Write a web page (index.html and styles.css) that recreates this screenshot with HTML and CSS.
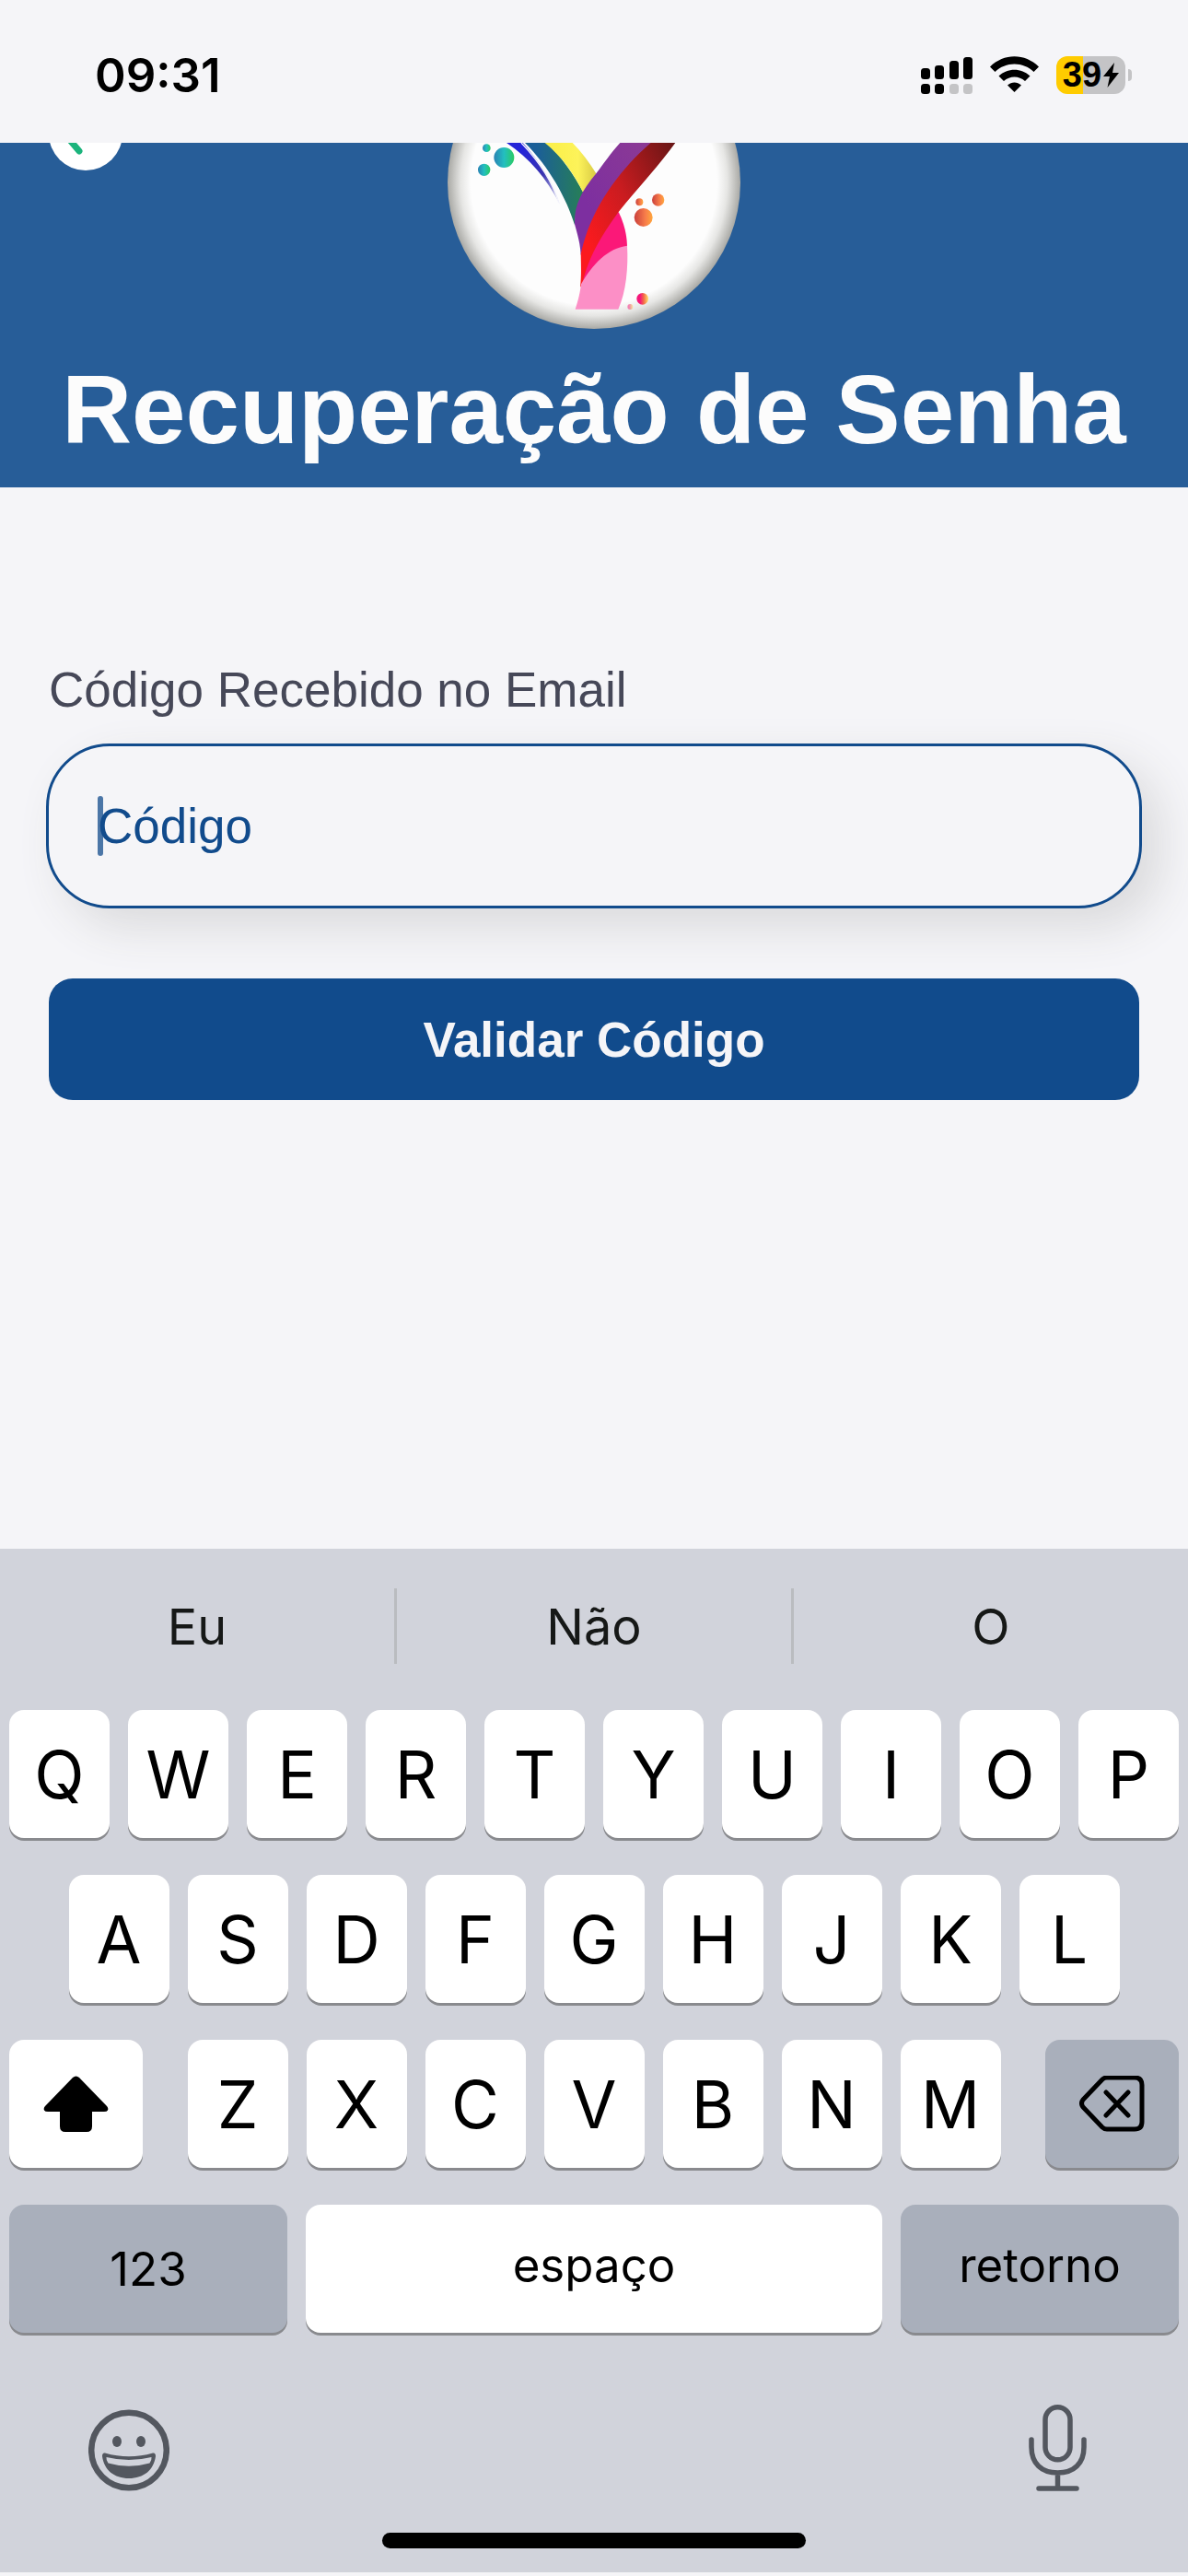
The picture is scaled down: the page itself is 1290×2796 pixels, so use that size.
FILE: index.html
```html
<!DOCTYPE html>
<html lang="pt-br">
<head>
    <meta charset="UTF-8">
    <meta name="viewport" content="width=device-width, initial-scale=1.0">
    <title>Recuperação de Senha</title>
    <link rel="stylesheet" href="styles.css">
</head>
<body>
    <div class="status-bar">
        <span class="time">09:31</span>
        <div class="status-icons">
            <svg class="signal" viewBox="0 0 56 41">
                <rect x="0" y="13" width="10" height="12" rx="3.500"/>
                <rect x="15" y="10" width="10" height="15" rx="3.500"/>
                <rect x="31" y="5" width="10" height="20" rx="3.500"/>
                <rect x="46" y="1" width="10" height="24" rx="3.500"/>
                <rect x="0" y="30" width="10" height="11" rx="3.500"/>
                <rect x="15" y="30" width="10" height="11" rx="3.500"/>
                <rect x="31" y="30" width="10" height="11" rx="3.500" fill="#c4c4c6"/>
                <rect x="46" y="30" width="10" height="11" rx="3.500" fill="#c4c4c6"/>
            </svg>
            <svg class="wifi" viewBox="0 0 53 41">
                <path d="M0 11.500C15-3.500 38-3.500 53 11.500L47.500 17C36 5.500 17 5.500 5.500 17Z"/>
                <path d="M9.500 21.500C19 12.500 34 12.500 43.500 21.500L38 27C31.500 21 21.500 21 15 27Z"/>
                <path d="M19 31.500C23.500 27.500 29.500 27.500 34 31.500L26.500 39Z"/>
            </svg>
            <div class="battery">
                <div class="battery-level">
                    <span>39</span>
                    <svg class="bolt" viewBox="0 0 17 27"><path d="M12 0L0 15H7L4.500 27L17 11H10Z"/></svg>
                </div>
                <div class="battery-tip"></div>
            </div>
        </div>
    </div>

    <header class="header">
        <div class="header-top">
            <button type="button" class="back-button" aria-label="Voltar">
                <svg viewBox="0 0 80 80"><path d="M33 59L17 40L33 21"/></svg>
            </button>
            <svg class="logo" viewBox="78 45 954 606" role="img" aria-label="Logo">
                <defs>
                    <radialGradient id="plate">
                        <stop offset="0.84" stop-color="#fdfdfd"/>
                        <stop offset="0.91" stop-color="#e6e6e4"/>
                        <stop offset="1" stop-color="#a9a9a5"/>
                    </radialGradient>
                    <linearGradient id="teal"><stop offset="0.2" stop-color="#1b5f98"/><stop offset="1" stop-color="#277f55"/></linearGradient>
                    <linearGradient id="blue" x1="0" y1="0" x2="1" y2="1"><stop offset="0.2" stop-color="#2424d8"/><stop offset="0.6" stop-color="#3a34b0"/><stop offset="1" stop-color="#e8e8f8"/></linearGradient>
                    <linearGradient id="yellow"><stop offset="0.2" stop-color="#fbf04c"/><stop offset="0.65" stop-color="#fdf35a"/><stop offset="1" stop-color="#d9cb45"/></linearGradient>
                    <linearGradient id="purple" x1="0" y1="1" x2="1" y2="0"><stop offset="0.3" stop-color="#7d2fa0"/><stop offset="1" stop-color="#8c3a94"/></linearGradient>
                    <linearGradient id="red" x1="0" y1="0.8" x2="1" y2="0"><stop offset="0.1" stop-color="#fb1a1e"/><stop offset="0.5" stop-color="#c91c20"/><stop offset="1" stop-color="#661515"/></linearGradient>
                    <linearGradient id="sea"><stop offset="0" stop-color="#2a82b4"/><stop offset="0.5" stop-color="#23bfc0"/><stop offset="1" stop-color="#2bcb62"/></linearGradient>
                    <linearGradient id="orange"><stop offset="0" stop-color="#c93f3c"/><stop offset="0.6" stop-color="#f77c4a"/><stop offset="1" stop-color="#ffa83e"/></linearGradient>
                    <linearGradient id="candy"><stop offset="0.3" stop-color="#f5177a"/><stop offset="0.6" stop-color="#f26a48"/><stop offset="1" stop-color="#ffe36a"/></linearGradient>
                </defs>
                <circle cx="555" cy="174" r="477" fill="url(#plate)"/>
                <path d="M270 45H323C375 105 420 170 444 246C400 160 345 95 270 45Z" fill="url(#blue)"/>
                <path d="M318 45C375 105 418 165 440 240" fill="none" stroke="#f4f4fc" stroke-width="4"/>
                <path d="M330 45H400C450 90 490 150 522 210C505 240 495 270 492 312C465 225 410 125 330 45Z" fill="url(#teal)"/>
                <path d="M395 45H485C515 75 540 110 562 145L522 212C490 145 450 90 395 45Z" fill="url(#yellow)"/>
                <path d="M640 45H745L560 330L512 410C510 370 500 340 492 310C490 250 512 205 562 145C585 115 612 75 640 45Z" fill="url(#purple)"/>
                <path d="M740 45H820C770 115 700 190 635 270L580 400L518 505L510 515C514 480 513 450 512 408C540 270 630 140 740 45Z" fill="url(#red)"/>
                <path d="M635 270C652 305 662 340 663 382L570 480L517 503C535 420 580 345 635 270Z" fill="#fb1878"/>
                <path d="M663 380C667 450 660 530 634 587H494C505 555 510 530 513 505C550 440 600 388 663 380Z" fill="#fc8fc6"/>
                <g fill="url(#sea)">
                    <circle cx="205" cy="62" r="13"/>
                    <circle cx="262" cy="93" r="33"/>
                    <circle cx="197" cy="133" r="20"/>
                </g>
                <g fill="url(#orange)">
                    <circle cx="703" cy="238" r="12"/>
                    <circle cx="764" cy="231" r="20"/>
                    <circle cx="716" cy="288" r="30"/>
                </g>
                <g fill="url(#candy)">
                    <circle cx="713" cy="553" r="19"/>
                    <circle cx="673" cy="579" r="9" opacity="0.5"/>
                </g>
            </svg>
        </div>
        <h1 class="title">Recuperação de Senha</h1>
    </header>

    <form class="code-form">
        <label for="codigo">Código Recebido no Email</label>
        <div class="input-box">
            <input type="text" id="codigo" placeholder="Código">
            <span class="caret"></span>
        </div>
        <button type="button" class="submit-button">Validar Código</button>
    </form>

    <div class="keyboard">
        <div class="suggestions">
            <button type="button">Eu</button>
            <button type="button">Não</button>
            <button type="button">O</button>
        </div>

        <div class="keys">
            <div class="key-row">
                <button type="button" class="key">Q</button>
                <button type="button" class="key">W</button>
                <button type="button" class="key">E</button>
                <button type="button" class="key">R</button>
                <button type="button" class="key">T</button>
                <button type="button" class="key">Y</button>
                <button type="button" class="key">U</button>
                <button type="button" class="key">I</button>
                <button type="button" class="key">O</button>
                <button type="button" class="key">P</button>
            </div>
            <div class="key-row">
                <button type="button" class="key">A</button>
                <button type="button" class="key">S</button>
                <button type="button" class="key">D</button>
                <button type="button" class="key">F</button>
                <button type="button" class="key">G</button>
                <button type="button" class="key">H</button>
                <button type="button" class="key">J</button>
                <button type="button" class="key">K</button>
                <button type="button" class="key">L</button>
            </div>
            <div class="key-row spread">
                <button type="button" class="key side" aria-label="Maiúsculas">
                    <svg class="key-icon" viewBox="0 0 71 61"><path d="M32 2Q35.500-1 39 2L69 33Q71 35.500 70 37.500Q69 39 66 39H53V55Q53 61 47 61H24Q18 61 18 55V39H5Q2 39 1 37.500Q0 35.500 2 33Z"/></svg>
                </button>
                <div class="key-group">
                    <button type="button" class="key">Z</button>
                    <button type="button" class="key">X</button>
                    <button type="button" class="key">C</button>
                    <button type="button" class="key">V</button>
                    <button type="button" class="key">B</button>
                    <button type="button" class="key">N</button>
                    <button type="button" class="key">M</button>
                </div>
                <button type="button" class="key side gray" aria-label="Apagar">
                    <svg class="key-icon line" viewBox="0 0 71 61">
                        <path d="M30 2H60Q68 2 68 10V50Q68 58 60 58H30Q27 58 25 56L4 34Q1 30 4 26L25 4Q27 2 30 2Z"/>
                        <path d="M29 18L53 43M53 18L29 43"/>
                    </svg>
                </button>
            </div>
            <div class="key-row">
                <button type="button" class="key wide gray numbers">123</button>
                <button type="button" class="key word space">espaço</button>
                <button type="button" class="key wide word gray">retorno</button>
            </div>
        </div>

        <div class="keyboard-tools">
            <button type="button" aria-label="Emoji">
                <svg class="emoji" viewBox="0 0 88 89">
                    <circle cx="44" cy="44.500" r="40.800" fill="none" stroke="#53575f" stroke-width="6.500"/>
                    <ellipse cx="31" cy="35" rx="5" ry="6"/>
                    <ellipse cx="57" cy="35" rx="5" ry="6"/>
                    <path d="M18 47.500Q44 55 70 47.500Q73 47 73 51C71 66 60 75 44 75C28 75 17 66 15 51Q15 47 18 47.500Z"/>
                    <path d="M19.500 52Q44 58 68.500 52Q69 55 66.500 58.500Q44 65 21.500 58.500Q19 55 19.500 52Z" fill="#d1d3db"/>
                </svg>
            </button>
            <button type="button" aria-label="Ditado">
                <svg class="mic" viewBox="0 0 63 94">
                    <rect x="18" y="2.800" width="27" height="57" rx="13.500"/>
                    <path d="M3 38V46C3 64 14 74 31.500 74C49 74 60 64 60 46V38M31.500 74V90M11 91H52"/>
                </svg>
            </button>
        </div>
        <div class="home-bar"></div>
    </div>
</body>
</html>
```
FILE: styles.css
```css
* {
    box-sizing: border-box;
}

body {
    margin: 0;
    padding-bottom: 4px;
    min-height: 100vh;
    display: flex;
    flex-direction: column;
    font-family: "Liberation Sans", Arial, sans-serif;
    background-color: #f5f5f8;
    color: #000;
}

button {
    margin: 0;
    padding: 0;
    border: none;
    background: none;
    color: inherit;
    font-family: inherit;
    cursor: pointer;
}

svg {
    display: block;
}

/* barra de status */
.status-bar {
    display: flex;
    justify-content: space-between;
    align-items: center;
    height: 155px;
    padding: 8px 61px 0 103px;
}

.time {
    font-family: Inter, sans-serif;
    font-size: 51px;
    font-weight: 600;
}

.status-icons {
    display: flex;
    align-items: center;
    gap: 19px;
}

.signal {
    width: 56px;
    height: 41px;
}

.wifi {
    width: 53px;
    height: 41px;
}

.battery {
    display: flex;
    align-items: center;
    gap: 3px;
}

.battery-level {
    display: flex;
    align-items: center;
    justify-content: center;
    gap: 2px;
    width: 75px;
    height: 41px;
    border-radius: 12px;
    background: linear-gradient(to right, #ffcc00 39%, #c4c4c6 39%);
    font-size: 38px;
    font-weight: bold;
}

.bolt {
    width: 17px;
    height: 27px;
}

.battery-tip {
    width: 4px;
    height: 13px;
    border-radius: 0 6px 6px 0;
    background-color: #c4c4c6;
}

/* cabeçalho */
.header {
    overflow: hidden;
    padding-bottom: 24px;
    background-color: #275d98;
}

.header-top {
    display: grid;
    grid-template-columns: 1fr auto 1fr;
    align-items: start;
    padding: 0 53px;
}

.back-button {
    width: 80px;
    height: 80px;
    margin-top: -50px;
    border-radius: 50%;
    background-color: #fff;
}

.back-button path {
    fill: none;
    stroke: #1bb47c;
    stroke-width: 7;
    stroke-linecap: round;
    stroke-linejoin: round;
}

.logo {
    width: 318px;
    height: 202px;
}

.title {
    margin: 28px 0 0;
    font-size: 105px;
    line-height: 120px;
    text-align: center;
    color: #fcfcfc;
}

/* formulário */
.code-form {
    flex: 1;
    display: flex;
    flex-direction: column;
    padding: 190px 53px 0;
}

.code-form label {
    font-size: 53px;
    line-height: 60px;
    color: #464858;
}

.input-box {
    position: relative;
    margin: 28px -3px 0;
}

.input-box input {
    display: block;
    width: 100%;
    height: 179px;
    padding: 0 53px;
    border: 3px solid #114b8c;
    border-radius: 69px;
    outline: none;
    background-color: #f5f5f8;
    box-shadow: 20px 20px 50px #dadadc;
    font-family: inherit;
    font-size: 53px;
    color: #114b8c;
}

.input-box input::placeholder {
    color: #114b8c;
    opacity: 1;
}

.caret {
    position: absolute;
    left: 56px;
    top: 57px;
    width: 6px;
    height: 65px;
    border-radius: 3px;
    background-color: #114b8c;
    opacity: 0.75;
}

.submit-button {
    height: 132px;
    margin-top: 76px;
    border-radius: 26px;
    background-color: #114b8c;
    color: #f5f5f8;
    font-size: 53px;
    font-weight: bold;
}

/* teclado */
.keyboard {
    padding-bottom: 26px;
    background-color: #d1d3db;
    font-family: Inter, sans-serif;
}

.suggestions {
    display: flex;
    padding: 43px 0 50px;
}

.suggestions button {
    flex: 1 1 0;
    height: 82px;
    font-size: 54px;
    color: #161817;
}

.suggestions button:not(:last-child) {
    border-right: 3px solid #babcc0;
}

.keys {
    display: flex;
    flex-direction: column;
    gap: 40px;
    padding: 0 10px;
}

.key-row {
    display: flex;
    justify-content: center;
    gap: 20px;
}

.key-row.spread {
    justify-content: space-between;
}

.key-group {
    display: flex;
    gap: 20px;
}

.key {
    display: flex;
    align-items: center;
    justify-content: center;
    width: 109px;
    height: 139px;
    border-radius: 16px;
    background-color: #fff;
    box-shadow: 0 3px 0 #898a8e;
    font-size: 71px;
}

.key.side {
    width: 145px;
}

.key.wide {
    width: 302px;
}

.key.space {
    flex: 1;
}

.key.gray {
    background-color: #a9afbb;
}

.key.numbers {
    font-size: 51px;
}

.key.word {
    padding-bottom: 8px;
    font-size: 51px;
}

.key-icon {
    width: 71px;
    height: 61px;
}

.key-icon.line {
    fill: none;
    stroke: #000;
    stroke-width: 5;
    stroke-linecap: round;
    stroke-linejoin: round;
}

.keyboard-tools {
    display: flex;
    justify-content: space-between;
    align-items: flex-end;
    padding: 78px 110px 0 96px;
}

.emoji {
    width: 88px;
    height: 89px;
    fill: #53575f;
}

.mic {
    width: 63px;
    height: 94px;
    fill: none;
    stroke: #53575f;
    stroke-width: 5.5;
    stroke-linecap: round;
}

.home-bar {
    width: 460px;
    height: 17px;
    margin: 45px auto 0;
    border-radius: 9px;
    background-color: #000;
}
```
